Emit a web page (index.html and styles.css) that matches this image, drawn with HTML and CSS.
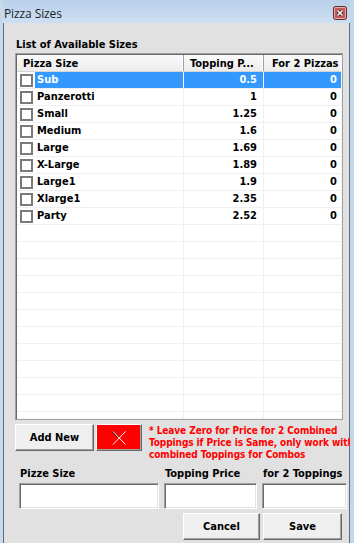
FILE: index.html
```html
<!DOCTYPE html>
<html lang="en">
    <head>
        <meta charset="UTF-8" />
        <title>Pizza Sizes</title>
        <link rel="stylesheet" href="styles.css">
    </head>
    <body>
        <div class="window">
            <div class="titlebar">
                <span class="title">Pizza Sizes</span>
                <span class="close">
                    <svg width="14" height="14" viewBox="0 0 14 14">
                        <rect x="0.5" y="0.5" width="13" height="13" rx="2" fill="#c85a5a" stroke="#5b2a2a" />
                        <rect x="1.5" y="1.5" width="11" height="11" rx="1" fill="none" stroke="#e8aeae" />
                        <path d="M4.5 4.5 L9.5 9.5 M9.5 4.5 L4.5 9.5" stroke="#3a1a1a" stroke-width="3" />
                        <path d="M4.5 4.5 L9.5 9.5 M9.5 4.5 L4.5 9.5" stroke="#fff" stroke-width="1.6" />
                    </svg>
                </span>
            </div>
            <div class="client">
                <div class="caption">List of Available Sizes</div>

                <div class="list">
                    <div class="list-head">
                        <div class="col-name">Pizza Size</div>
                        <div class="col-price">Topping P...</div>
                        <div class="col-two">For 2 Pizzas</div>
                    </div>
                    <div class="list-body">
                        <div class="row selected">
                            <div class="col-name"><span class="check"></span><span class="name">Sub</span></div>
                            <div class="col-price">0.5</div>
                            <div class="col-two">0</div>
                        </div>
                        <div class="row">
                            <div class="col-name"><span class="check"></span><span class="name">Panzerotti</span></div>
                            <div class="col-price">1</div>
                            <div class="col-two">0</div>
                        </div>
                        <div class="row">
                            <div class="col-name"><span class="check"></span><span class="name">Small</span></div>
                            <div class="col-price">1.25</div>
                            <div class="col-two">0</div>
                        </div>
                        <div class="row">
                            <div class="col-name"><span class="check"></span><span class="name">Medium</span></div>
                            <div class="col-price">1.6</div>
                            <div class="col-two">0</div>
                        </div>
                        <div class="row">
                            <div class="col-name"><span class="check"></span><span class="name">Large</span></div>
                            <div class="col-price">1.69</div>
                            <div class="col-two">0</div>
                        </div>
                        <div class="row">
                            <div class="col-name"><span class="check"></span><span class="name">X-Large</span></div>
                            <div class="col-price">1.89</div>
                            <div class="col-two">0</div>
                        </div>
                        <div class="row">
                            <div class="col-name"><span class="check"></span><span class="name">Large1</span></div>
                            <div class="col-price">1.9</div>
                            <div class="col-two">0</div>
                        </div>
                        <div class="row">
                            <div class="col-name"><span class="check"></span><span class="name">Xlarge1</span></div>
                            <div class="col-price">2.35</div>
                            <div class="col-two">0</div>
                        </div>
                        <div class="row">
                            <div class="col-name"><span class="check"></span><span class="name">Party</span></div>
                            <div class="col-price">2.52</div>
                            <div class="col-two">0</div>
                        </div>
                        <div class="row"><div class="col-name"></div><div class="col-price"></div><div class="col-two"></div></div>
                        <div class="row"><div class="col-name"></div><div class="col-price"></div><div class="col-two"></div></div>
                        <div class="row"><div class="col-name"></div><div class="col-price"></div><div class="col-two"></div></div>
                        <div class="row"><div class="col-name"></div><div class="col-price"></div><div class="col-two"></div></div>
                        <div class="row"><div class="col-name"></div><div class="col-price"></div><div class="col-two"></div></div>
                        <div class="row"><div class="col-name"></div><div class="col-price"></div><div class="col-two"></div></div>
                        <div class="row"><div class="col-name"></div><div class="col-price"></div><div class="col-two"></div></div>
                        <div class="row"><div class="col-name"></div><div class="col-price"></div><div class="col-two"></div></div>
                        <div class="row"><div class="col-name"></div><div class="col-price"></div><div class="col-two"></div></div>
                        <div class="row"><div class="col-name"></div><div class="col-price"></div><div class="col-two"></div></div>
                        <div class="row"><div class="col-name"></div><div class="col-price"></div><div class="col-two"></div></div>
                        <div class="row"><div class="col-name"></div><div class="col-price"></div><div class="col-two"></div></div>
                    </div>
                </div>

                <div class="actions">
                    <button class="btn btn-add">Add New</button>
                    <button class="btn btn-delete">
                        <svg width="16" height="16" viewBox="0 0 16 16">
                            <path d="M1.5 1.5 L8 8" stroke="#7a0000" stroke-width="2" />
                            <path d="M2 1.5 L14.5 14.5 M14.5 1.5 L2 14.5" stroke="#fff" stroke-width="1" />
                        </svg>
                    </button>
                    <p class="note">* Leave Zero for Price for 2 Combined<br>Toppings if Price is Same, only work with<br>combined Toppings for Combos</p>
                </div>

                <div class="fields">
                    <label for="size" class="lbl-size">Pizze Size</label>
                    <label for="price" class="lbl-price">Topping Price</label>
                    <label for="two" class="lbl-two">for 2 Toppings</label>
                    <input id="size" type="text" class="in-size" />
                    <input id="price" type="text" class="in-price" />
                    <input id="two" type="text" class="in-two" />
                </div>

                <div class="footer">
                    <button class="btn btn-cancel">Cancel</button>
                    <button class="btn btn-save">Save</button>
                </div>
            </div>
        </div>
    </body>
</html>
```

FILE: styles.css
```css
html,
body {
    margin: 0;
    height: 100%;
    overflow: hidden;
}
body {
    background: #fff;
    font-family: "DejaVu Sans Condensed", "DejaVu Sans", sans-serif;
    font-stretch: semi-condensed;
}
.window {
    width: 354px;
    height: 543px;
    box-sizing: border-box;
    border-left: 3px solid #c9d9ec;
    border-right: 4px solid #c4d6ea;
    box-shadow: inset 1px 0 0 #5d6b7a, inset -1px 0 0 #5d6b7a;
    background: #e1e1e1;
    display: flex;
    flex-direction: column;
    overflow: hidden;
}
.titlebar {
    height: 23px;
    flex: none;
    display: flex;
    align-items: center;
    justify-content: space-between;
    padding: 3px 3px 0 1px;
    box-sizing: border-box;
    background: linear-gradient(#b9d0ea, #cddff3);
}
.title {
    font-family: "Open Sans", sans-serif;
    font-size: 12px;
    font-stretch: normal;
    color: #1e1e1e;
    letter-spacing: -0.1px;
}
.close {
    display: flex;
}
.client {
    flex: 1;
    padding: 0 0 0 12px;
    font-weight: bold;
    font-size: 11px;
    color: #000;
}
.caption {
    font-size: 11px;
    margin: 15px 0 0 1px;
    height: 15px;
    line-height: 14px;
}

/* list view */
.list {
    width: 328px;
    height: 367px;
    box-sizing: border-box;
    border: 1px solid #a0a0a0;
    box-shadow: inset 1px 1px 0 #696969, inset -1px -1px 0 #f6f6f6;
    padding: 1px;
    background: #fff;
    overflow: hidden;
    display: flex;
    flex-direction: column;
}
.list-head,
.row {
    display: flex;
}
.list-head {
    height: 17px;
    flex: none;
    background: linear-gradient(#fafafa, #ececec);
    border-bottom: 1px solid #d5d5d5;
    box-sizing: border-box;
}
.list-head > div {
    border-right: 1px solid #a0a0a0;
    box-shadow: inset -1px 0 0 #fff;
    line-height: 16px;
    padding: 1px 0 0 6px;
    box-sizing: border-box;
    white-space: nowrap;
    overflow: hidden;
}
.list-head .col-two {
    border-right: 0;
    padding-left: 8px;
}
.col-name {
    width: 167px;
    flex: none;
}
.col-price {
    width: 80px;
    flex: none;
}
.col-two {
    width: 77px;
    flex: none;
}
.list-body {
    flex: 1;
    overflow: hidden;
}
.row {
    height: 17px;
    box-sizing: border-box;
    border-bottom: 1px solid #f0f0f0;
}
.row > div {
    border-right: 1px solid #f0f0f0;
    box-sizing: border-box;
    line-height: 16px;
    white-space: nowrap;
}
.row .col-two {
    border-right: 0;
}
.row .col-price {
    text-align: right;
    padding-right: 6px;
}
.row .col-two {
    text-align: right;
    padding-right: 4px;
}
.row .col-name {
    display: flex;
    align-items: center;
    padding-left: 3px;
}
.check {
    width: 13px;
    height: 13px;
    box-sizing: border-box;
    border: 2px solid #7a7a7a;
    background: #fff;
    margin-right: 2px;
    flex: none;
}
.name {
    padding-left: 2px;
    flex: 1;
}
.selected .name,
.selected .col-price,
.selected .col-two {
    background: #3399ff;
    color: #fff;
}
.selected .col-price,
.selected .col-name {
    border-right-color: #fff;
}

/* buttons */
.btn {
    font-family: inherit;
    font-stretch: inherit;
    font-weight: bold;
    font-size: 11px;
    color: #000;
    background: #efefef;
    border: 1px solid #fff;
    border-right-color: #6a6a6a;
    border-bottom-color: #6a6a6a;
    box-shadow: inset -1px -1px 0 #a0a0a0;
    padding: 0;
    height: 27px;
    flex: none;
}
.actions {
    display: flex;
    align-items: flex-start;
    margin-top: 4px;
    height: 38px;
}
.btn-add {
    width: 79px;
}
.btn-delete {
    width: 46px;
    margin-left: 2px;
    background: #ff0000;
    display: flex;
    align-items: center;
    justify-content: center;
}
.note {
    margin: 1px 0 0 7px;
    color: #ff0000;
    font-size: 10px;
    line-height: 12px;
    letter-spacing: -0.08px;
    white-space: nowrap;
}

/* edit fields */
.fields {
    display: grid;
    grid-template-columns: 145px 98px 85px;
    margin-left: 4px;
}
.fields label {
    height: 21px;
    line-height: 14px;
    padding: 5px 0 0 1px;
    box-sizing: border-box;
    white-space: nowrap;
}
.fields input {
    height: 26px;
    box-sizing: border-box;
    border: 1px solid #a0a0a0;
    border-right-color: #fff;
    border-bottom-color: #fff;
    box-shadow: inset 1px 1px 0 #696969, inset -1px -1px 0 #e3e3e3;
    background: #fff;
}
.in-size {
    width: 140px;
}
.in-price {
    width: 93px;
}
.in-two {
    width: 85px;
}
.footer {
    display: flex;
    gap: 3px;
    margin: 4px 0 0 168px;
}
.btn-cancel {
    width: 77px;
}
.btn-save {
    width: 79px;
}
```
